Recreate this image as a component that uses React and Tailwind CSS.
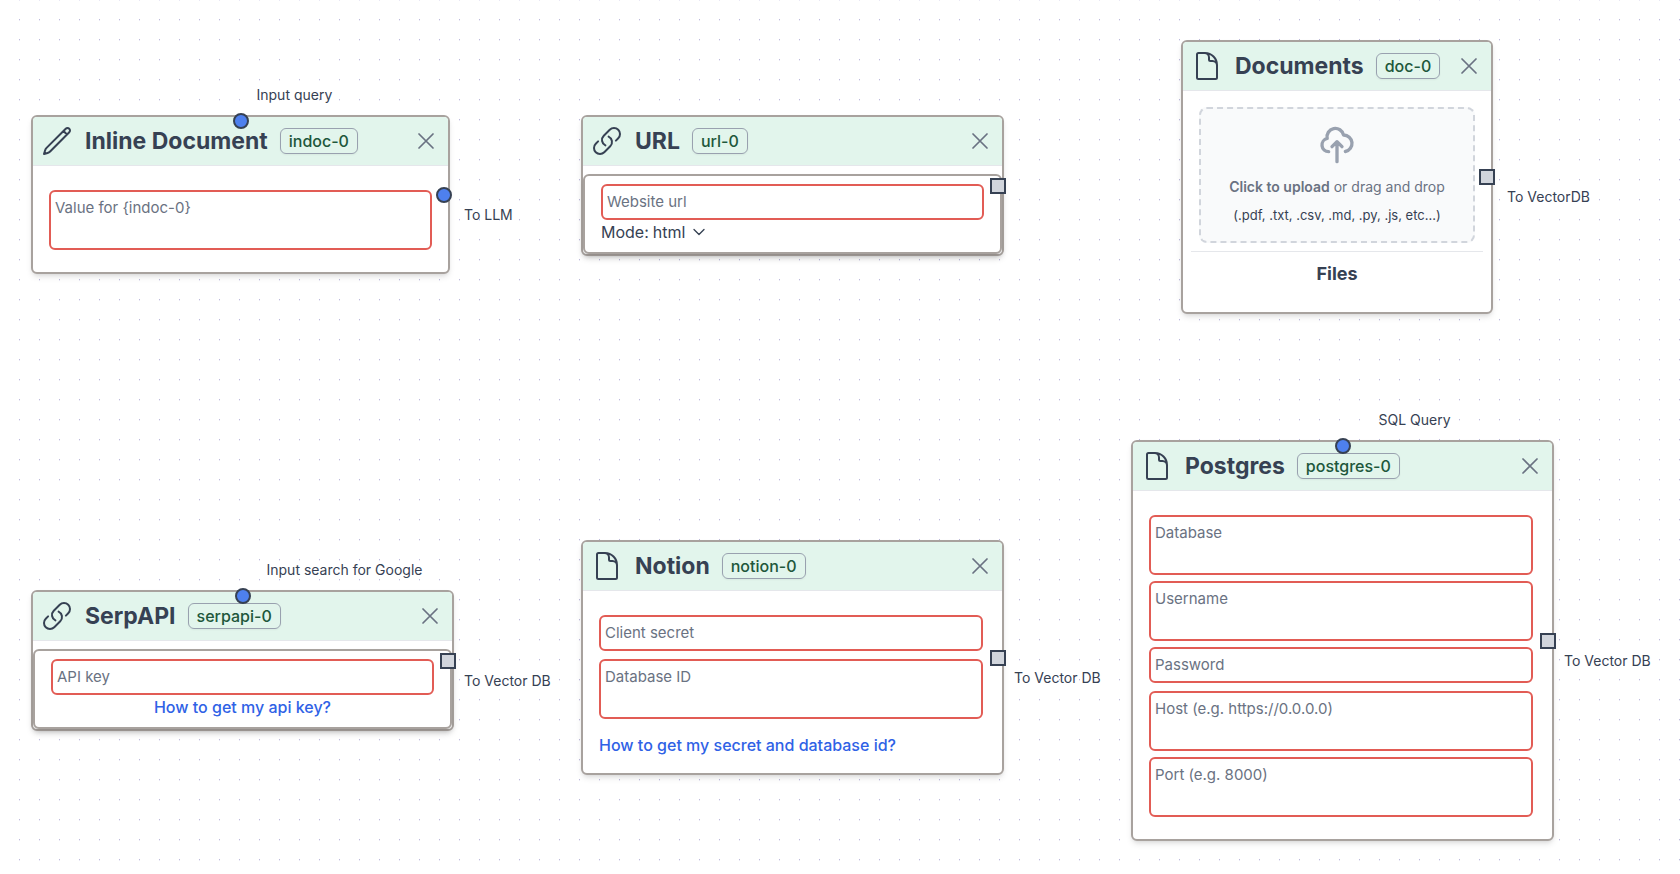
const iconPaths = {
  pencil:
    "M16.862 4.487l1.687-1.688a1.875 1.875 0 112.652 2.652L6.832 19.82a4.5 4.5 0 01-1.897 1.13l-2.685.8.8-2.685a4.5 4.5 0 011.13-1.897L16.863 4.487zm0 0L19.5 7.125",
  link: "M13.19 8.688a4.5 4.5 0 011.242 7.244l-4.5 4.5a4.5 4.5 0 01-6.364-6.364l1.757-1.757m13.35-.622l1.757-1.757a4.5 4.5 0 00-6.364-6.364l-4.5 4.5a4.5 4.5 0 001.242 7.244",
  document:
    "M19.5 14.25v-2.625a3.375 3.375 0 00-3.375-3.375h-1.5A1.125 1.125 0 0113.5 7.125v-1.5a3.375 3.375 0 00-3.375-3.375H8.25m2.25 0H5.625c-.621 0-1.125.504-1.125 1.125v17.25c0 .621.504 1.125 1.125 1.125h12.75c.621 0 1.125-.504 1.125-1.125V11.25a9 9 0 00-9-9z",
  close: "M6 18L18 6M6 6l12 12",
  chevron: "M19.5 8.25l-7.5 7.5-7.5-7.5",
  upload:
    "M7 16a4 4 0 01-.88-7.903A5 5 0 1115.9 6L16 6a5 5 0 011 9.9M15 13l-3-3m0 0l-3 3m3-3v12",
};

function Icon({ name, className, strokeWidth = 1.5 }) {
  return (
    <svg
      viewBox="0 0 24 24"
      className={className}
      fill="none"
      stroke="currentColor"
      strokeWidth={strokeWidth}
      strokeLinecap="round"
      strokeLinejoin="round"
      aria-hidden="true"
    >
      <path d={iconPaths[name]} />
    </svg>
  );
}

function Node({ icon, title, id, place, input, output, children }) {
  return (
    <section
      className={`absolute rounded-md border-2 border-[#a8a29e] bg-white shadow-md ${place}`}
    >
      <header className="flex h-[49px] items-center rounded-t-sm border-b border-gray-200 bg-[#e2f5ec] px-2">
        <Icon name={icon} className="size-8 shrink-0" />
        <h2 className="ml-3 text-[23px] font-bold">{title}</h2>
        <span className="ml-3 rounded-md border border-gray-400 px-2 text-base font-medium text-[#20573b] shadow-xs">
          {id}
        </span>
        <button type="button" aria-label={`Remove ${title}`} className="ml-auto text-gray-500">
          <Icon name="close" className="size-7" />
        </button>
      </header>
      {children}
      {input && (
        <>
          <span className="absolute -top-1 left-1/2 size-4 -translate-x-1/2 rounded-full border-2 border-gray-700 bg-[#4e80ee]" />
          <span className={`absolute -top-8 left-1/2 text-sm whitespace-nowrap ${input.shift}`}>
            {input.label}
          </span>
        </>
      )}
      <span
        className={`absolute top-1/2 -right-1 size-4 -translate-y-1/2 border-2 border-gray-700 ${
          output.round ? "rounded-full bg-[#4e80ee]" : "bg-gray-300"
        }`}
      />
      {output.label && (
        <span className={`absolute top-1/2 left-full mt-2.5 text-sm whitespace-nowrap ${output.shift}`}>
          {output.label}
        </span>
      )}
    </section>
  );
}

const fieldStyle =
  "block w-full max-w-96 resize-none rounded-md border-2 border-[#e25c55] bg-white p-1 text-[15px] leading-6 placeholder:text-gray-500";

function TextField({ label, type = "text" }) {
  return <input type={type} aria-label={label} placeholder={label} className={fieldStyle} />;
}

function TextArea({ label }) {
  return (
    <div className="mb-1.5">
      <textarea rows={2} aria-label={label} placeholder={label} className={fieldStyle} />
    </div>
  );
}

function InnerCard({ children }) {
  return (
    <div className="mt-2 rounded-md border-2 border-[#a8a29e] bg-white px-4 py-2 shadow-md">
      {children}
    </div>
  );
}

function ModeSelect() {
  return (
    <div className="flex items-center gap-1">
      <label htmlFor="mode">Mode:</label>
      <div className="grid items-center">
        <select
          id="mode"
          defaultValue="html"
          className="col-start-1 row-start-1 field-sizing-content appearance-none bg-transparent pr-6"
        >
          <option>html</option>
        </select>
        <Icon
          name="chevron"
          strokeWidth={2}
          className="pointer-events-none col-start-1 row-start-1 mr-0.5 size-4 justify-self-end"
        />
      </div>
    </div>
  );
}

export default function App() {
  return (
    <main className="relative min-h-screen w-full overflow-hidden bg-white font-['Inter',sans-serif] text-gray-700">
      <svg className="absolute inset-0 size-full" aria-hidden="true">
        <pattern id="dots" width="20" height="20" patternUnits="userSpaceOnUse">
          <rect x="19" y="19" width="1" height="1" fill="#bcb8de" />
          <rect x="19" y="0" width="1" height="1" fill="#e9e7f5" />
        </pattern>
        <rect width="100%" height="100%" fill="url(#dots)" />
      </svg>

      <Node
        icon="pencil"
        title="Inline Document"
        id="indoc-0"
        place="left-[31px] top-[115px] w-[419px]"
        input={{ label: "Input query", shift: "ml-4" }}
        output={{ label: "To LLM", round: true, shift: "ml-4" }}
      >
        <div className="px-4 pt-6 pb-4">
          <TextArea label="Value for {indoc-0}" />
        </div>
      </Node>

      <Node
        icon="link"
        title="URL"
        id="url-0"
        place="left-[581px] top-[115px] w-[423px]"
        output={{}}
      >
        <InnerCard>
          <TextField label="Website url" />
          <ModeSelect />
        </InnerCard>
      </Node>

      <Node
        icon="document"
        title="Documents"
        id="doc-0"
        place="left-[1181px] top-[40px] w-[312px]"
        output={{ label: "To VectorDB", shift: "ml-4" }}
      >
        <div className="px-2 pt-4 pb-6 text-center">
          <label className="mx-2 flex cursor-pointer flex-col items-center rounded-lg border-2 border-dashed border-gray-300 bg-gray-50 py-4 text-sm">
            <Icon name="upload" strokeWidth={2} className="mb-3 size-10 text-gray-400" />
            <span className="mb-2 text-gray-500">
              <span className="font-semibold">Click to upload</span> or drag and drop
            </span>
            <span className="text-[13px] leading-5">(.pdf, .txt, .csv, .md, .py, .js, etc...)</span>
            <input type="file" multiple className="sr-only" />
          </label>
          <hr className="my-2 border-gray-200" />
          <h3 className="text-lg font-bold">Files</h3>
        </div>
      </Node>

      <Node
        icon="link"
        title="SerpAPI"
        id="serpapi-0"
        place="left-[31px] top-[590px] w-[423px]"
        input={{ label: "Input search for Google", shift: "ml-6" }}
        output={{ label: "To Vector DB", shift: "ml-3" }}
      >
        <InnerCard>
          <TextField label="API key" />
          <a href="#api-key" className="block text-center font-medium text-[#2f62e6]">
            How to get my api key?
          </a>
        </InnerCard>
      </Node>

      <Node
        icon="document"
        title="Notion"
        id="notion-0"
        place="left-[581px] top-[540px] w-[423px]"
        output={{ label: "To Vector DB", shift: "ml-3" }}
      >
        <div className="px-4 pt-6 pb-4">
          <div className="mb-2">
            <TextField label="Client secret" type="password" />
          </div>
          <TextArea label="Database ID" />
          <a href="#notion-help" className="mt-3.5 block font-medium text-[#2f62e6]">
            How to get my secret and database id?
          </a>
        </div>
      </Node>

      <Node
        icon="document"
        title="Postgres"
        id="postgres-0"
        place="left-[1131px] top-[440px] w-[423px]"
        input={{ label: "SQL Query", shift: "ml-9" }}
        output={{ label: "To Vector DB", shift: "ml-3" }}
      >
        <div className="px-4 pt-6 pb-4">
          <TextArea label="Database" />
          <TextArea label="Username" />
          <div className="mb-2">
            <TextField label="Password" type="password" />
          </div>
          <TextArea label="Host (e.g. https://0.0.0.0)" />
          <TextArea label="Port (e.g. 8000)" />
        </div>
      </Node>
    </main>
  );
}
